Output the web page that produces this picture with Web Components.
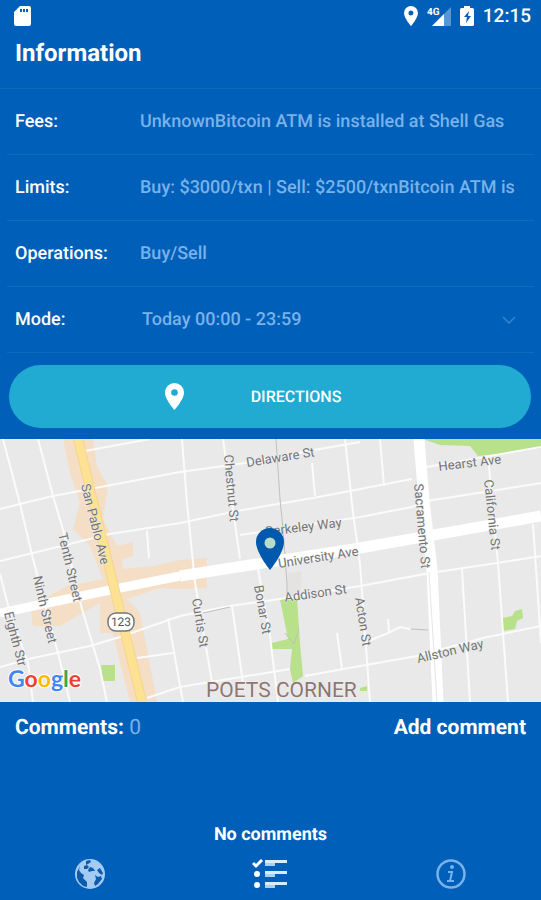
<!DOCTYPE html>
<html lang="en">
<head>
<meta charset="utf-8">
<meta name="viewport" content="width=device-width, initial-scale=1">
<title>Information</title>
<style>
  :root {
    --blue: #005fb8;
    --pale: #78b2ea;
    --line: #0d6bc0;
  }
  body {
    margin: 0;
    background: var(--blue);
    color: #fff;
    font-family: Roboto, "Liberation Sans", sans-serif;
    text-rendering: geometricPrecision;
  }
</style>
</head>
<body>
<atm-screen>
  <status-bar slot="status">12:15</status-bar>
  <span slot="title">Information</span>
  <info-row><span slot="label">Fees:</span>UnknownBitcoin ATM is installed at Shell Gas</info-row>
  <info-row><span slot="label">Limits:</span>Buy: $3000/txn | Sell: $2500/txnBitcoin ATM is</info-row>
  <info-row><span slot="label">Operations:</span>Buy/Sell</info-row>
  <mode-row></mode-row>
  <pill-button>DIRECTIONS</pill-button>
  <street-map></street-map>
  <comments-panel count="0">No comments</comments-panel>
  <tab-bar slot="tabs"></tab-bar>
</atm-screen>

<script>
/* Page shell */
class AtmScreen extends HTMLElement {
  constructor() {
    super();
    this.attachShadow({ mode: 'open' });
    this.shadowRoot.innerHTML = `
      <style>
        :host { display: flex; flex-direction: column; min-height: 100vh; }
        h1 {
          margin: 0;
          padding: 5px 15px 19px;
          font-size: 24px;
          line-height: 32px;
          font-weight: 700;
          border-bottom: 1px solid var(--line);
        }
        main { flex: 1; display: flex; flex-direction: column; }
      </style>
      <slot name="status"></slot>
      <h1><slot name="title"></slot></h1>
      <main><slot></slot></main>
      <slot name="tabs"></slot>
    `;
  }
}
customElements.define('atm-screen', AtmScreen);

class StatusBar extends HTMLElement {
  constructor() {
    super();
    this.attachShadow({ mode: 'open' });
    this.shadowRoot.innerHTML = `
      <style>
        :host {
          display: flex;
          align-items: center;
          height: 32px;
          padding: 0 10px 0 14px;
          font-size: 19px;
          line-height: 32px;
          font-weight: 500;
        }
        svg { display: block; fill: #fff; }
        .right { display: flex; align-items: center; gap: 9px; margin-left: auto; }
      </style>
      <svg width="17" height="20" viewBox="0 0 17 20">
        <path fill-rule="evenodd" d="M6 0h9a2 2 0 0 1 2 2v16a2 2 0 0 1-2 2H2a2 2 0 0 1-2-2V6zM6 3v3h2V3zM9 3v3h2V3zM12 3v3h2V3z"/>
      </svg>
      <div class="right">
        <svg width="14" height="20" viewBox="0 0 14 20">
          <path fill-rule="evenodd" d="M7 0a7 7 0 0 0-7 7c0 5 7 13 7 13s7-8 7-13a7 7 0 0 0-7-7zm0 4.500a2.500 2.500 0 1 0 0 5 2.500 2.500 0 0 0 0-5z"/>
        </svg>
        <svg width="24" height="20" viewBox="0 0 24 20">
          <path d="M24 1v19H5z" fill-opacity=".35"/>
          <path d="M17 8v12H5z"/>
          <text x="0" y="9" font-size="10" font-weight="700">4G</text>
        </svg>
        <svg width="14" height="20" viewBox="0 0 14 20">
          <path fill-rule="evenodd" d="M4 0h6v2h2.500A1.500 1.500 0 0 1 14 3.500v15a1.500 1.500 0 0 1-1.500 1.500h-11A1.500 1.500 0 0 1 0 18.500v-15A1.500 1.500 0 0 1 1.500 2H4zM9 5l-5 6h3l-1 6 5-7H8z"/>
        </svg>
        <slot></slot>
      </div>
    `;
  }
}
customElements.define('status-bar', StatusBar);

// shared by the plain rows and the row with the drop-down
const rowStyle = `
  :host {
    display: flex;
    align-items: center;
    height: 65px;
    margin: 0 7px;
    padding: 0 8px;
    font-size: 18px;
    font-weight: 500;
    line-height: 24px;
    border-bottom: 1px solid var(--line);
  }
  .label { flex: 0 0 125px; }
  .value { flex: 1; min-width: 0; color: var(--pale); white-space: nowrap; }
`;

class InfoRow extends HTMLElement {
  constructor() {
    super();
    this.attachShadow({ mode: 'open' });
    this.shadowRoot.innerHTML = `
      <style>${rowStyle}</style>
      <span class="label"><slot name="label"></slot></span>
      <span class="value"><slot></slot></span>
    `;
  }
}
customElements.define('info-row', InfoRow);

class ModeRow extends HTMLElement {
  constructor() {
    super();
    this.attachShadow({ mode: 'open' });
    this.shadowRoot.innerHTML = `
      <style>
        ${rowStyle}
        select {
          appearance: none;
          height: 40px;
          padding: 0 2px;
          border: 0;
          background: none;
          font: inherit;
          text-rendering: inherit;
        }
        option { color: #000; }
        svg { flex: none; margin-right: 10px; }
      </style>
      <label class="label" for="mode">Mode:</label>
      <select class="value" id="mode"><option>Today 00:00 - 23:59</option></select>
      <svg width="14" height="8" viewBox="0 0 14 8" fill="none" stroke="#3585d0" stroke-width="1.500"><path d="M1 1l6 6 6-6"/></svg>
    `;
  }
}
customElements.define('mode-row', ModeRow);

class PillButton extends HTMLElement {
  constructor() {
    super();
    this.attachShadow({ mode: 'open' });
    this.shadowRoot.innerHTML = `
      <style>
        :host { display: block; padding: 12px 10px 11px 9px; }
        button {
          display: flex;
          align-items: center;
          justify-content: center;
          gap: 67px;
          width: 100%;
          height: 63px;
          padding: 0 34px 0 0;
          border: 0;
          border-radius: 32px;
          background: #21abd3;
          color: #fff;
          font: 500 16px/24px Roboto, sans-serif;
          text-rendering: inherit;
        }
      </style>
      <button type="button">
        <svg width="19" height="27" viewBox="0 0 19 27" fill="#fff">
          <path fill-rule="evenodd" d="M9.500 0A9.500 9.500 0 0 0 0 9.500C0 16.500 9.500 27 9.500 27S19 16.500 19 9.500A9.500 9.500 0 0 0 9.500 0zm0 6.200a3.300 3.300 0 1 1 0 6.600 3.300 3.300 0 0 1 0-6.600z"/>
        </svg>
        <slot></slot>
      </button>
    `;
  }
}
customElements.define('pill-button', PillButton);

/* Map: roads, parks and labels live on one canvas */
class StreetMap extends HTMLElement {
  constructor() {
    super();
    this.attachShadow({ mode: 'open' });
    const labels = [
      ['San Pablo Ave', 81, 46, 76],
      ['Tenth Street', 58, 95, 77],
      ['Ninth Street', 33, 138, 77],
      ['Eighth Str', 4, 174, 75],
      ['Chestnut St', 224, 16, 85],
      ['Delaware St', 247, 28, -9],
      ['Berkeley Way', 266, 97, -7],
      ['University Ave', 279, 129, -9],
      ['Addison St', 285, 163, -8],
      ['Bonar St', 254, 147, 80],
      ['Curtis St', 192, 160, 81],
      ['Acton St', 355, 159, 81],
      ['Sacramento St', 414, 45, 85],
      ['California St', 484, 41, 84],
      ['Hearst Ave', 439, 32, -7],
      ['Allston Way', 418, 224, -13],
    ];
    const texts = labels
      .map(([name, x, y, a]) => `<text transform="translate(${x} ${y}) rotate(${a})">${name}</text>`)
      .join('');

    this.shadowRoot.innerHTML = `
      <style>
        :host { display: block; background: #e9e9e9; }
        svg { display: block; width: 100%; height: auto; }
        .labels { font-size: 13px; fill: #747474; stroke: #f0f0f0; stroke-width: 1px; paint-order: stroke; }
      </style>
      <svg viewBox="0 0 541 263" role="img" aria-label="Map">
        <rect width="541" height="263" fill="#e9e9e9"/>
        <path fill="#f4dfc6" d="M63 0H93L97 27 108 47 103 80 110 94 117 107 133 103V117L122 120 123 130 153 127 180 121 207 119V149L180 150 160 149 127 160 140 174 147 210 157 263H130L120 224 113 194H100V164L77 177 60 187H33L30 167 67 147 103 140 90 107 73 90 80 64 70 34z"/>
        <g fill="#b9e08b">
          <path d="M423 0L440 6 470 7 478 17 507 14 541 9V0z"/>
          <path d="M280 160H297L300 204 303 237 293 244 290 230 292 210H272V204L288 200z"/>
          <path d="M502 179L512 177 515 172 522 170 523 179 517 182 515 190 503 192z"/>
          <path d="M101 226H115V242H103zM360 249L367 247V252H360z"/>
        </g>
        <path fill="#e4e3df" d="M288 134L302 132 300 158H287z"/>
        <g fill="none" stroke="#fbfbfb" stroke-width="2">
          <path d="M3 0L20 65 33 120 58 214 70 263M38 0L53 57 64 94 82 170 100 230 107 263M0 135L10 174 28 224 33 263"/>
          <path d="M0 70L20 65 53 57 180 33 245 24 320 10 360 3M85 12L150 0"/>
          <path d="M0 122L33 114 110 95 180 84 237 72 313 59 360 50 412 40M427 28L541 8"/>
          <path d="M240 96L360 78 412 68 427 62 541 44M147 92L149 119"/>
          <path d="M0 228L33 219 90 207 120 198 180 177 230 167 280 160 360 147 430 134 497 124 541 117"/>
          <path d="M137 219L173 214M168 179L177 230 183 263M147 259L180 248 290 230M305 237L360 227 417 217 483 199 541 187"/>
          <path d="M182 0L187 64 195 144 212 243M223 0L240 120M258 130L270 197 278 263M232 167L243 244"/>
          <path d="M312 24L315 57M345 0L353 74 360 125 370 263M337 194L342 230M380 0L384 47M462 130L470 263"/>
          <path d="M488 17L498 124 503 194 508 263M533 85L541 204M364 204L388 194 400 188 410 190M388 180L389 193"/>
        </g>
        <g fill="none" stroke="#c0c0bd">
          <path d="M276 0L280 60 283 90 287 144V154M203 174L230 168M411 190L428 191M285 194L294 205 299 190"/>
        </g>
        <path d="M0 174L110 151 180 137" fill="none" stroke="#fff" stroke-width="9"/>
        <path d="M180 137L360 109 541 77" fill="none" stroke="#fff" stroke-width="11"/>
        <path d="M419 0L424 62 432 130 438 263" fill="none" stroke="#fff" stroke-width="11"/>
        <path d="M429 133L437 263" fill="none" stroke="#e5e5e5"/>
        <path d="M78 0L113 144 142 263" fill="none" stroke="#f6d58c" stroke-width="10"/>
        <path d="M78 0L113 144 142 263" fill="none" stroke="#fde293" stroke-width="8"/>
        <g class="labels">${texts}</g>
        <rect x="108" y="174" width="26" height="18" rx="8" fill="#fff" stroke="#777" stroke-width="1.500"/>
        <text x="121" y="187" text-anchor="middle" font-size="12" fill="#555">123</text>
        <text x="206" y="258" font-size="21" fill="#8d7770" stroke="#f2f2f2" stroke-width="1" paint-order="stroke">POETS CORNER</text>
        <text x="8" y="248" font-family="Lato" font-size="23" font-weight="700" stroke="#fff" stroke-width="2" paint-order="stroke"><tspan fill="#4285f4">G</tspan><tspan fill="#ea4335">o</tspan><tspan fill="#fbbc05">o</tspan><tspan fill="#4285f4">g</tspan><tspan fill="#34a853">l</tspan><tspan fill="#ea4335">e</tspan></text>
        <path fill="#0059ad" d="M270 89a14 14 0 0 0-14 14c0 11 14 28 14 28s14-17 14-28a14 14 0 0 0-14-14z"/>
        <circle cx="270" cy="104" r="5.500" fill="#b8dcc8"/>
      </svg>
    `;
  }
}
customElements.define('street-map', StreetMap);

class CommentsPanel extends HTMLElement {
  constructor() {
    super();
    this.attachShadow({ mode: 'open' });
    this.shadowRoot.innerHTML = `
      <style>
        :host { flex: 1; display: flex; flex-direction: column; }
        header {
          display: flex;
          justify-content: space-between;
          padding: 12px 15px;
          font-size: 21px;
          line-height: 28px;
        }
        h2 { margin: 0; font: inherit; font-weight: 700; }
        h2 span { color: var(--pale); font-weight: 400; }
        button {
          padding: 0;
          border: 0;
          background: none;
          color: inherit;
          font: inherit;
          font-weight: 700;
          text-rendering: inherit;
        }
        p { margin: auto 0 0; font-size: 18px; line-height: 24px; font-weight: 700; text-align: center; }
      </style>
      <header>
        <h2>Comments: <span>${this.getAttribute('count')}</span></h2>
        <button type="button">Add comment</button>
      </header>
      <p><slot></slot></p>
    `;
  }
}
customElements.define('comments-panel', CommentsPanel);

class TabBar extends HTMLElement {
  constructor() {
    super();
    this.attachShadow({ mode: 'open' });
    this.shadowRoot.innerHTML = `
      <style>
        :host { display: block; }
        nav { display: grid; grid-template-columns: repeat(3, 1fr); height: 53px; }
        a { display: flex; align-items: center; justify-content: center; color: var(--pale); }
        a.active { color: #fff; }
      </style>
      <nav>
        <a href="#map" aria-label="Map">
          <svg width="32" height="32" viewBox="0 0 32 32">
            <circle cx="16" cy="16" r="15" fill="#a5cbf2"/>
            <path fill="#0b5cae" d="M12 3l4-1 1 2-3 2-2 1zM6 8l-3 6 0 6 2 4 4 4 4 1 0-5-4-4 1-3-3-2-2-3zM10 8l3-1 2 2-2 2-3 0zM14 12l2-3 3 1 2 3-3 0-3 1zM23 12l3-2 3 5-1 2-3-2zM21 17l3 2 3-1 1 3-4 5-3 2-1-3 2-4z"/>
          </svg>
        </a>
        <a class="active" href="#info" aria-label="Details">
          <svg width="36" height="30" viewBox="0 0 36 30">
            <path d="M1 4l3 3 6-6" fill="none" stroke="currentColor" stroke-width="3"/>
            <circle cx="5" cy="15" r="3" fill="currentColor"/>
            <circle cx="5" cy="26" r="3" fill="currentColor"/>
            <path fill="#d8ecff" d="M13 1h22v3H13zM13 12h22v3H13zM13 23h22v3H13z"/>
            <path fill="#a9cff2" d="M13 4h10v3H13zM13 15h10v3H13zM13 26h10v3H13z"/>
          </svg>
        </a>
        <a href="#about" aria-label="About">
          <svg width="30" height="30" viewBox="0 0 30 30">
            <circle cx="15" cy="15" r="13.500" fill="none" stroke="currentColor" stroke-width="2.500"/>
            <circle cx="16" cy="8" r="2" fill="currentColor"/>
            <path d="M12 13h4l-2 9h4M11 22h4" fill="none" stroke="currentColor" stroke-width="2"/>
          </svg>
        </a>
      </nav>
    `;
  }
}
customElements.define('tab-bar', TabBar);
</script>
</body>
</html>
